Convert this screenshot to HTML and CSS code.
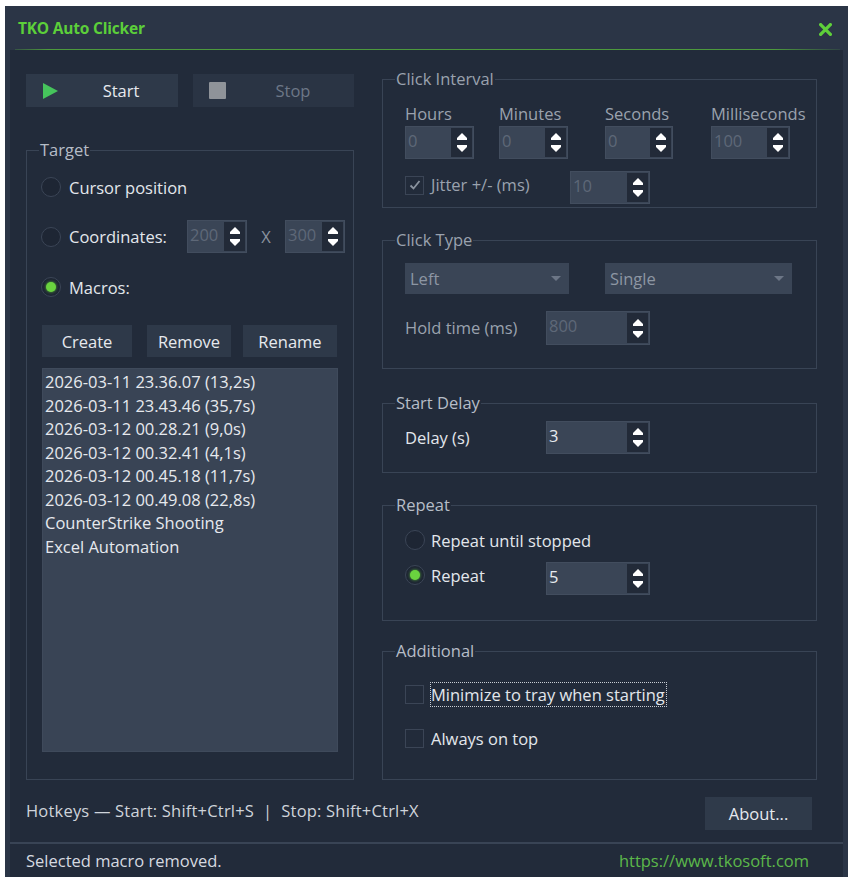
FILE: index.html
```html
<!DOCTYPE html>
<html>
<head>
<meta charset="utf-8">
<title>TKO Auto Clicker</title>
<link rel="stylesheet" href="styles.css">
</head>
<body>
<div class="window">
  <div class="titlebar">
    <span class="title">TKO Auto Clicker</span>
    <svg class="close" viewBox="0 0 12 12" width="13" height="13"><path d="M1.5 1.5 L10.5 10.5 M10.5 1.5 L1.5 10.5" stroke="#5ecf3a" stroke-width="3" stroke-linecap="square"/></svg>
  </div>
  <div class="accent"></div>
  <div class="panel">
    <div class="columns">
      <div class="left">
        <div class="runrow">
          <button class="btn run start"><svg class="play" viewBox="0 0 15 16" width="15" height="16"><polygon points="0,0 15,8 0,16" fill="#46c45c"/></svg><span class="run-text">Start</span></button>
          <button class="btn run stop"><span class="sq"></span><span class="run-text">Stop</span></button>
        </div>
        <fieldset class="group target">
          <legend>Target</legend>
          <div class="target-body">
            <div class="opt row1"><span class="radio"></span><span>Cursor position</span></div>
            <div class="opt row2">
              <span class="radio"></span>
              <span class="coord-label">Coordinates:</span>
              <div class="spin w60 dis"><span class="val">200</span><span class="arrows"><svg viewBox="0 0 10 7" width="10" height="7"><polygon points="5,0 10,5 10,7 0,7 0,5" fill="#fff"/></svg><svg viewBox="0 0 10 7" width="10" height="7"><polygon points="0,0 10,0 10,2 5,7 0,2" fill="#fff"/></svg></span></div>
              <span class="xsep">X</span>
              <div class="spin w60 dis"><span class="val">300</span><span class="arrows"><svg viewBox="0 0 10 7" width="10" height="7"><polygon points="5,0 10,5 10,7 0,7 0,5" fill="#fff"/></svg><svg viewBox="0 0 10 7" width="10" height="7"><polygon points="0,0 10,0 10,2 5,7 0,2" fill="#fff"/></svg></span></div>
            </div>
            <div class="opt row3"><span class="radio on"></span><span>Macros:</span></div>
            <div class="macro-btns">
              <button class="btn mb create">Create</button>
              <button class="btn mb remove">Remove</button>
              <button class="btn mb rename">Rename</button>
            </div>
            <ul class="list">
              <li>2026-03-11 23.36.07 (13,2s)</li>
              <li>2026-03-11 23.43.46 (35,7s)</li>
              <li>2026-03-12 00.28.21 (9,0s)</li>
              <li>2026-03-12 00.32.41 (4,1s)</li>
              <li>2026-03-12 00.45.18 (11,7s)</li>
              <li>2026-03-12 00.49.08 (22,8s)</li>
              <li>CounterStrike Shooting</li>
              <li>Excel Automation</li>
            </ul>
          </div>
        </fieldset>
      </div>

      <div class="right">
        <fieldset class="group interval dimmed">
          <legend>Click Interval</legend>
          <div class="interval-body">
            <div class="interval-grid">
              <div class="cell"><span class="lbl">Hours</span>
                <div class="spin w69 dis"><span class="val">0</span><span class="arrows"><svg viewBox="0 0 10 7" width="10" height="7"><polygon points="5,0 10,5 10,7 0,7 0,5" fill="#fff"/></svg><svg viewBox="0 0 10 7" width="10" height="7"><polygon points="0,0 10,0 10,2 5,7 0,2" fill="#fff"/></svg></span></div></div>
              <div class="cell"><span class="lbl">Minutes</span>
                <div class="spin w69 dis"><span class="val">0</span><span class="arrows"><svg viewBox="0 0 10 7" width="10" height="7"><polygon points="5,0 10,5 10,7 0,7 0,5" fill="#fff"/></svg><svg viewBox="0 0 10 7" width="10" height="7"><polygon points="0,0 10,0 10,2 5,7 0,2" fill="#fff"/></svg></span></div></div>
              <div class="cell"><span class="lbl">Seconds</span>
                <div class="spin w68 dis"><span class="val">0</span><span class="arrows"><svg viewBox="0 0 10 7" width="10" height="7"><polygon points="5,0 10,5 10,7 0,7 0,5" fill="#fff"/></svg><svg viewBox="0 0 10 7" width="10" height="7"><polygon points="0,0 10,0 10,2 5,7 0,2" fill="#fff"/></svg></span></div></div>
              <div class="cell"><span class="lbl">Milliseconds</span>
                <div class="spin w79 dis"><span class="val">100</span><span class="arrows"><svg viewBox="0 0 10 7" width="10" height="7"><polygon points="5,0 10,5 10,7 0,7 0,5" fill="#fff"/></svg><svg viewBox="0 0 10 7" width="10" height="7"><polygon points="0,0 10,0 10,2 5,7 0,2" fill="#fff"/></svg></span></div></div>
            </div>
            <div class="jitter-row">
              <div class="check-wrap">
                <span class="checkbox checked"><svg viewBox="0 0 14 14" width="14" height="14"><path d="M2.5 7.5 L5.5 10.5 L11.5 3" stroke="#8b939f" stroke-width="1.8" fill="none"/></svg></span>
                <span class="lbl">Jitter +/- (ms)</span>
              </div>
              <div class="spin w80 dis"><span class="val">10</span><span class="arrows"><svg viewBox="0 0 10 7" width="10" height="7"><polygon points="5,0 10,5 10,7 0,7 0,5" fill="#fff"/></svg><svg viewBox="0 0 10 7" width="10" height="7"><polygon points="0,0 10,0 10,2 5,7 0,2" fill="#fff"/></svg></span></div>
            </div>
          </div>
        </fieldset>

        <fieldset class="group clicktype dimmed">
          <legend>Click Type</legend>
          <div class="clicktype-body">
            <div class="combos">
              <div class="combo c-left"><span>Left</span><svg viewBox="0 0 10 5" width="10" height="5"><polygon points="0,0 10,0 5,5" fill="#6c7686"/></svg></div>
              <div class="combo c-single"><span>Single</span><svg viewBox="0 0 10 5" width="10" height="5"><polygon points="0,0 10,0 5,5" fill="#6c7686"/></svg></div>
            </div>
            <div class="field-row hold">
              <span class="field-label lbl">Hold time (ms)</span>
              <div class="spin w104 tall dis"><span class="val">800</span><span class="arrows"><svg viewBox="0 0 10 7" width="10" height="7"><polygon points="5,0 10,5 10,7 0,7 0,5" fill="#fff"/></svg><svg viewBox="0 0 10 7" width="10" height="7"><polygon points="0,0 10,0 10,2 5,7 0,2" fill="#fff"/></svg></span></div>
            </div>
          </div>
        </fieldset>

        <fieldset class="group delay">
          <legend>Start Delay</legend>
          <div class="delay-body">
            <div class="field-row">
              <span class="field-label">Delay (s)</span>
              <div class="spin w104"><span class="val">3</span><span class="arrows"><svg viewBox="0 0 10 7" width="10" height="7"><polygon points="5,0 10,5 10,7 0,7 0,5" fill="#fff"/></svg><svg viewBox="0 0 10 7" width="10" height="7"><polygon points="0,0 10,0 10,2 5,7 0,2" fill="#fff"/></svg></span></div>
            </div>
          </div>
        </fieldset>

        <fieldset class="group repeat">
          <legend>Repeat</legend>
          <div class="repeat-body">
            <div class="opt rrow1"><span class="radio"></span><span>Repeat until stopped</span></div>
            <div class="field-row rrow2">
              <span class="field-label opt"><span class="radio on"></span><span>Repeat</span></span>
              <div class="spin w104"><span class="val">5</span><span class="arrows"><svg viewBox="0 0 10 7" width="10" height="7"><polygon points="5,0 10,5 10,7 0,7 0,5" fill="#fff"/></svg><svg viewBox="0 0 10 7" width="10" height="7"><polygon points="0,0 10,0 10,2 5,7 0,2" fill="#fff"/></svg></span></div>
            </div>
          </div>
        </fieldset>

        <fieldset class="group additional">
          <legend>Additional</legend>
          <div class="additional-body">
            <div class="crow crow1"><span class="checkbox"></span><span class="focus">Minimize to tray when starting</span></div>
            <div class="crow crow2"><span class="checkbox"></span><span class="plain">Always on top</span></div>
          </div>
        </fieldset>
      </div>
    </div>
    <div class="footer-row">
      <span class="hotkeys">Hotkeys — Start: Shift+Ctrl+S &nbsp;|&nbsp; Stop: Shift+Ctrl+X</span>
      <button class="btn about">About...</button>
    </div>
  </div>
  <div class="status">
    <span class="status-text">Selected macro removed.</span>
    <span class="link">https://www.tkosoft.com</span>
  </div>
</div>
</body>
</html>
```
FILE: styles.css
```css
* { box-sizing: border-box; }

body {
  margin: 0;
  background: #ffffff;
  font-family: "Open Sans", "Noto Sans", sans-serif;
  font-size: 16.5px;
  color: #e3e7ec;
}

.window {
  width: 843px;
  height: 871px;
  margin: 6px 0 0 5px;
  background: #2b3546;
  display: flex;
  flex-direction: column;
}

.titlebar {
  height: 43px;
  display: flex;
  align-items: center;
  justify-content: space-between;
  padding: 0 16px 0 13px;
}

.title {
  color: #5ccf3a;
  font-weight: 700;
  font-size: 15.5px;
  letter-spacing: -0.2px;
}

.close { display: block; margin-top: 3px; }

.accent {
  height: 1px;
  margin: 0 8px 0 10px;
  background: linear-gradient(90deg, rgba(80,160,60,0.3), #4d9a3d 4%, #4d9a3d 92%, rgba(80,160,60,0.15));
}

.panel {
  margin: 0 5px;
  background: #222b3a;
  height: 792px;
  padding: 19px 26px 0 16px;
  display: flex;
  flex-direction: column;
}

.columns { display: flex; gap: 28px; }
.left { width: 328px; padding-top: 5px; }
.right { width: 435px; display: flex; flex-direction: column; }

/* buttons */
.btn {
  font-family: inherit;
  font-size: 16.5px;
  color: #e6e9ee;
  background: #2e3949;
  border: none;
  padding: 0;
  margin: 0;
}

.runrow { display: flex; gap: 15px; }
.run {
  height: 33px;
  display: flex;
  align-items: center;
  padding-left: 17px;
}
.start { width: 152px; }
.stop { width: 161px; background: #2a3444; color: #6d7787; padding-left: 16px; }
.run-text { flex: 1; text-align: center; padding-left: 6px; }
.play { display: block; }
.sq { width: 17px; height: 17px; background: #8f9399; border-radius: 1px; }

/* groups */
.group {
  margin: 0;
  padding: 0;
  border: 1px solid #394455;
  min-width: 0;
}
.group legend {
  margin-left: 12px;
  padding: 0 1px;
  line-height: 20px;
  font-size: 16.5px;
  color: #b6bdc7;
}
.group.dimmed legend { color: #9aa2ae; }

.target { margin-top: 33px; height: 640px; }
.target-body {
  padding: 17px 15px 0 15px;
  display: flex;
  flex-direction: column;
}

.opt { display: flex; align-items: center; }
.opt > * { flex: none; }
.row1 { height: 20px; }
.row2 { height: 33px; margin-top: 23px; }
.row3 { height: 20px; margin-top: 24px; }

.radio {
  width: 20px;
  height: 20px;
  border-radius: 50%;
  border: 1.5px solid #3b4556;
  background: #1e2634;
  margin-left: -1px;
  margin-right: 8px;
  flex: none;
  display: flex;
  align-items: center;
  justify-content: center;
}
.radio.on::after {
  content: "";
  width: 10px;
  height: 10px;
  border-radius: 50%;
  background: #6ad33f;
  box-shadow: 0 0 3px #5bbf35;
}

.coord-label { width: 118px; white-space: nowrap; }
.xsep { width: 38px; text-align: center; color: #8a929e; }

/* spinbox */
.spin {
  display: flex;
  height: 33px;
  background: #3a4556;
  border: 1px solid #424d5e;
  flex: none;
}
.spin .val {
  flex: 1;
  padding-left: 2px;
  line-height: 28px;
  font-size: 16.5px;
  color: #e8ebef;
  overflow: hidden;
}
.spin.dis .val { color: #5e6878; }
.arrows {
  width: 21px;
  background: #222a38;
  margin: 1px 1px 1px 0;
  display: flex;
  flex-direction: column;
  align-items: center;
  justify-content: center;
  gap: 5px;
}
.arrows svg { display: block; }

.w60 { width: 60px; }
.w68 { width: 68px; }
.w69 { width: 69px; }
.w79 { width: 79px; }
.w80 { width: 80px; }
.w104 { width: 104px; }
.tall { height: 34px; }

.macro-btns { display: flex; margin-top: 28px; height: 32px; }
.mb { height: 32px; }
.create { width: 90px; }
.remove { width: 84px; margin-left: 15px; }
.rename { width: 94px; margin-left: 12px; }

.list {
  list-style: none;
  margin: 11px 0 0 0;
  padding: 1px 0 0 2px;
  width: 296px;
  height: 384px;
  background: #394455;
  border: 1px solid #3f4a5b;
}
.list li {
  line-height: 23.5px;
  color: #e6e9ee;
  white-space: nowrap;
}

/* right column */
.interval { height: 139px; }
.interval-body { padding: 15px 0 0 22px; }
.interval-grid {
  display: grid;
  grid-template-columns: 94px 106px 106px 80px;
}
.cell { display: flex; flex-direction: column; }
.lbl { color: #9aa2ae; line-height: 20px; white-space: nowrap; }
.cell .spin { margin-top: 2px; }

.jitter-row { display: flex; margin-top: 12px; height: 33px; }
.check-wrap { width: 165px; display: flex; align-items: center; height: 26px; margin-top: 1px; flex: none; }

.checkbox {
  width: 19px;
  height: 19px;
  border: 1.5px solid #3b4556;
  background: #222b3a;
  margin-right: 7px;
  flex: none;
  display: flex;
  align-items: center;
  justify-content: center;
}

.clicktype { margin-top: 22px; height: 139px; }
.clicktype-body { padding: 13px 0 0 22px; }
.combos { display: flex; gap: 36px; }
.combo {
  height: 31px;
  background: #3a4556;
  display: flex;
  align-items: center;
  justify-content: space-between;
  padding: 0 8px 0 5px;
  color: #8d96a3;
}
.c-left { width: 164px; }
.c-single { width: 187px; }
.combo svg { display: block; }

.field-row { display: flex; align-items: center; }
.field-label { width: 141px; flex: none; }
.hold { margin-top: 17px; }

.delay { margin-top: 24px; height: 80px; }
.delay-body { padding: 8px 0 0 22px; }

.repeat { margin-top: 22px; height: 126px; }
.repeat-body { padding: 15px 0 0 22px; }
.rrow1 { height: 20px; }
.rrow1 .radio, .rrow2 .radio { margin-left: 0; margin-right: 6px; }
.rrow2 { margin-top: 12px; align-items: flex-start; }
.rrow2 .field-label { margin-top: 3px; height: 20px; }

.additional { margin-top: 20px; height: 139px; }
.additional-body { padding: 21px 0 0 22px; }
.crow { display: flex; align-items: center; height: 25px; }
.crow2 { margin-top: 19px; }
.crow .checkbox { margin-right: 6px; }
.focus {
  border: 1px dotted #c9ced5;
  line-height: 23px;
  padding: 0 1px 0 0;
  white-space: nowrap;
}
.plain { padding-left: 1px; }

/* footer */
.footer-row {
  margin-top: 17px;
  display: flex;
  align-items: center;
  justify-content: space-between;
}
.hotkeys {
  color: #cfd4db;
  letter-spacing: 0.2px;
  margin-top: -6px;
  white-space: nowrap;
}
.about { width: 107px; height: 33px; margin-right: 5px; background: #2f3a4a; }

.status {
  margin: 0 5px;
  flex: 1;
  border-top: 2px solid #394455;
  background: #222b3a;
  display: flex;
  align-items: center;
  justify-content: space-between;
  padding: 0 34px 0 16px;
}
.status-text { color: #d6dae0; }
.link { color: #5cb84a; }
```
